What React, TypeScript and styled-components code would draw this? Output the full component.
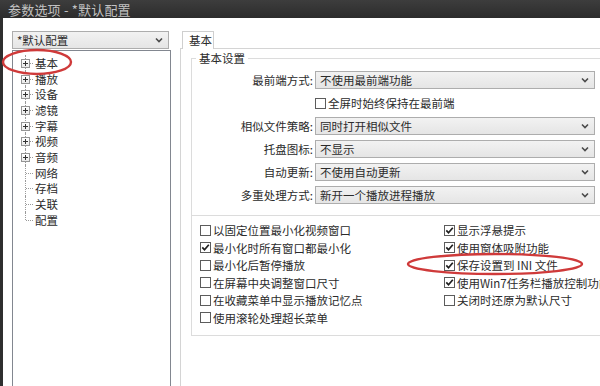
import styled, { createGlobalStyle } from "styled-components"

const GlobalStyle = createGlobalStyle`
  html, body {
    margin: 0;
    padding: 0;
    background: #fff;
  }
  body {
    font-family: "Noto Sans CJK SC", "Noto Sans", sans-serif;
  }
`

const Window = styled.div`
  position: relative;
  width: 600px;
  height: 386px;
  overflow: hidden;
  display: flex;
  flex-direction: column;
  background: #2f2f2f;
  font-size: 11.5px;
  color: #2b2b2b;
`

const TitleBar = styled.div`
  height: 18px;
  flex-shrink: 0;
  display: flex;
  align-items: center;
  padding-left: 8px;
  background: linear-gradient(#3d3d3d, #2c2c2c);
  color: #c2c2c2;
  font-size: 13px;
  letter-spacing: 0.2px;
`

const Body = styled.div`
  flex: 1;
  min-height: 0;
  display: flex;
  margin-left: 3px;
  background: #fff;
`

const Sidebar = styled.div`
  width: 159px;
  flex-shrink: 0;
  display: flex;
  flex-direction: column;
  gap: 1px;
  padding: 13px 0 0 9px;
`

const Combo = styled.div<{ $width?: number }>`
  box-sizing: border-box;
  width: ${(p) => (p.$width ? `${p.$width}px` : "auto")};
  height: 18px;
  display: flex;
  align-items: center;
  justify-content: space-between;
  padding: 0 5px 0 4px;
  border: 1px solid #adadad;
  background: linear-gradient(#f2f2f2, #e5e5e5);
  white-space: nowrap;
  line-height: 16px;
`

const TreeBox = styled.div`
  flex: 1;
  box-sizing: border-box;
  border: 1px solid #828790;
  border-bottom: none;
  padding-top: 4px;
  background: #fff;
`

const TreeRow = styled.div`
  height: 15.7px;
  display: flex;
  align-items: center;
  padding-left: 8px;
`

const Guide = styled.div<{ $last?: boolean }>`
  position: relative;
  width: 13px;
  height: 100%;
  flex-shrink: 0;
  &::before {
    content: "";
    position: absolute;
    left: 4px;
    top: 0;
    bottom: ${(p) => (p.$last ? "50%" : "0")};
    border-left: 1px dotted #9a9a9a;
  }
  &::after {
    content: "";
    position: absolute;
    left: 5px;
    top: 50%;
    width: 7px;
    border-top: 1px dotted #9a9a9a;
  }
`

const PlusBox = styled.div`
  position: absolute;
  left: 0;
  top: 50%;
  margin-top: -4px;
  width: 9px;
  height: 9px;
  box-sizing: border-box;
  border: 1px solid #959595;
  background: linear-gradient(#ffffff, #e9e9e9);
  z-index: 1;
  &::before,
  &::after {
    content: "";
    position: absolute;
    background: #333;
  }
  &::before {
    left: 1px;
    right: 1px;
    top: 3px;
    height: 1px;
  }
  &::after {
    top: 1px;
    bottom: 1px;
    left: 3px;
    width: 1px;
  }
`

const TreeLabel = styled.span`
  padding-left: 1px;
  white-space: nowrap;
`

const Main = styled.div`
  width: 440px;
  flex-shrink: 0;
  margin-left: 9px;
  padding-top: 13px;
  display: flex;
  flex-direction: column;
`

const TabStrip = styled.div`
  height: 17px;
  display: flex;
`

const Tab = styled.div`
  position: relative;
  z-index: 1;
  box-sizing: border-box;
  width: 32px;
  height: 18px;
  margin-left: 2px;
  padding-left: 6px;
  border: 1px solid #cfcfcf;
  border-bottom: none;
  background: #fff;
  line-height: 16px;
`

const TabPage = styled.div`
  flex: 1;
  border-left: 1px solid #d4d4d4;
  border-top: 1px solid #d4d4d4;
  padding-left: 10px;
`

const Group = styled.fieldset<{ $first?: boolean }>`
  width: 430px;
  margin: ${(p) => (p.$first ? "1px" : "-1px")} 0 0 0;
  padding: ${(p) => (p.$first ? "5px 0 11px 0" : "5px 0 8px 8px")};
  border: 1px solid #dcdcdc;
  border-right: none;
  min-inline-size: 0;
`

const Legend = styled.legend`
  margin-left: 4px;
  padding: 0 3px;
  line-height: 16px;
`

const FormGrid = styled.div`
  display: grid;
  grid-template-columns: 121px 280px;
  column-gap: 2px;
  row-gap: 5px;
  align-items: center;
`

const FieldLabel = styled.div`
  text-align: right;
  white-space: nowrap;
`

const CheckGrid = styled.div`
  display: grid;
  grid-template-columns: 244px auto;
  grid-template-rows: repeat(6, 17.6px);
  grid-auto-flow: column;
`

const CheckItem = styled.label<{ $column?: number }>`
  display: flex;
  align-items: center;
  gap: 2px;
  height: 18px;
  white-space: nowrap;
  grid-column: ${(p) => p.$column ?? "auto"};
`

const Box = styled.span`
  width: 11px;
  height: 11px;
  flex-shrink: 0;
  box-sizing: border-box;
  border: 1px solid #5c5c5c;
  background: #fff;
  display: flex;
  align-items: center;
  justify-content: center;
`

const Marks = styled.svg`
  position: absolute;
  left: 0;
  top: 0;
  pointer-events: none;
`

const Chevron = () => (
  <svg width="8" height="6" viewBox="0 0 8 6">
    <path d="M1 1.5 L4 4.5 L7 1.5" fill="none" stroke="#4a4a4a" strokeWidth="1.6" />
  </svg>
)

const Check = ({ checked, children, column }: { checked?: boolean; children: string; column?: number }) => (
  <CheckItem $column={column}>
    <Box>
      {checked && (
        <svg width="9" height="9" viewBox="0 0 9 9">
          <path d="M1.3 4.4 L3.5 6.8 L7.8 1.8" fill="none" stroke="#1e1e1e" strokeWidth="1.7" />
        </svg>
      )}
    </Box>
    {children}
  </CheckItem>
)

const tree = [
  { label: "基本", branch: true },
  { label: "播放", branch: true },
  { label: "设备", branch: true },
  { label: "滤镜", branch: true },
  { label: "字幕", branch: true },
  { label: "视频", branch: true },
  { label: "音频", branch: true },
  { label: "网络", branch: false },
  { label: "存档", branch: false },
  { label: "关联", branch: false },
  { label: "配置", branch: false },
]

const fields = [
  { label: "相似文件策略:", value: "同时打开相似文件" },
  { label: "托盘图标:", value: "不显示" },
  { label: "自动更新:", value: "不使用自动更新" },
  { label: "多重处理方式:", value: "新开一个播放进程播放" },
]

const leftChecks = [
  { text: "以固定位置最小化视频窗口", checked: false },
  { text: "最小化时所有窗口都最小化", checked: true },
  { text: "最小化后暂停播放", checked: false },
  { text: "在屏幕中央调整窗口尺寸", checked: false },
  { text: "在收藏菜单中显示播放记忆点", checked: false },
  { text: "使用滚轮处理超长菜单", checked: false },
]

const rightChecks = [
  { text: "显示浮悬提示", checked: true },
  { text: "使用窗体吸附功能", checked: true },
  { text: "保存设置到 INI 文件", checked: true },
  { text: "使用Win7任务栏播放控制功能", checked: true },
  { text: "关闭时还原为默认尺寸", checked: false },
]

export default function App() {
  return (
    <>
      <GlobalStyle />
      <Window>
        <TitleBar>参数选项 - *默认配置</TitleBar>
        <Body>
          <Sidebar>
            <Combo $width={157}>
              <span>*默认配置</span>
              <Chevron />
            </Combo>
            <TreeBox>
              {tree.map((item, i) => (
                <TreeRow key={item.label}>
                  <Guide $last={i === tree.length - 1}>{item.branch && <PlusBox />}</Guide>
                  <TreeLabel>{item.label}</TreeLabel>
                </TreeRow>
              ))}
            </TreeBox>
          </Sidebar>
          <Main>
            <TabStrip>
              <Tab>基本</Tab>
            </TabStrip>
            <TabPage>
              <Group $first>
                <Legend>基本设置</Legend>
                <FormGrid>
                  <FieldLabel>最前端方式:</FieldLabel>
                  <Combo>
                    <span>不使用最前端功能</span>
                    <Chevron />
                  </Combo>
                  <Check column={2}>全屏时始终保持在最前端</Check>
                  {fields.map((f) => (
                    <>
                      <FieldLabel key={f.label}>{f.label}</FieldLabel>
                      <Combo key={f.value}>
                        <span>{f.value}</span>
                        <Chevron />
                      </Combo>
                    </>
                  ))}
                </FormGrid>
              </Group>
              <Group>
                <CheckGrid>
                  {leftChecks.map((c) => (
                    <Check key={c.text} checked={c.checked}>
                      {c.text}
                    </Check>
                  ))}
                  {rightChecks.map((c) => (
                    <Check key={c.text} checked={c.checked}>
                      {c.text}
                    </Check>
                  ))}
                </CheckGrid>
              </Group>
            </TabPage>
          </Main>
        </Body>
        <Marks width="600" height="386" viewBox="0 0 600 386">
          <ellipse cx="37" cy="62" rx="34" ry="12" fill="none" stroke="#cf3a3a" strokeWidth="2.4" />
          <ellipse cx="495" cy="264" rx="87" ry="10" fill="none" stroke="#cf3a3a" strokeWidth="2.4" />
        </Marks>
      </Window>
    </>
  )
}
